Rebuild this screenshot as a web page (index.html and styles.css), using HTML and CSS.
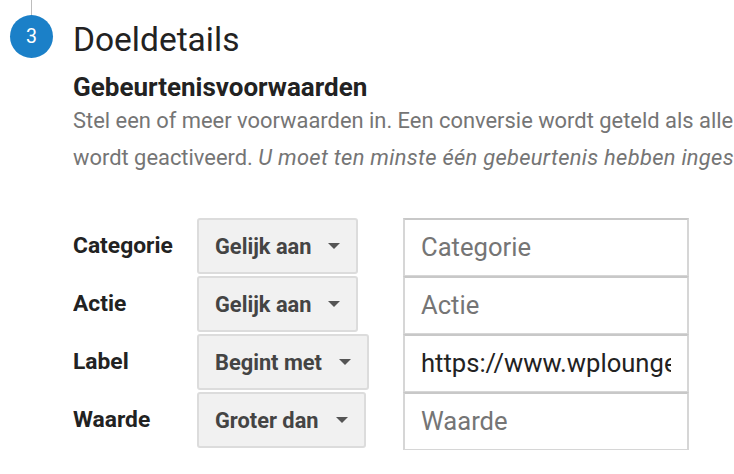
FILE: index.html
```html
<!DOCTYPE html>
<html lang="nl">
<head>
<meta charset="utf-8">
<link rel="stylesheet" href="styles.css">
</head>
<body>
<div class="step">
  <div class="rail">
    <div class="rail-line"></div>
    <div class="badge">3</div>
  </div>
  <div class="content">
    <h1 class="title">Doeldetails</h1>
    <h2 class="subtitle">Gebeurtenisvoorwaarden</h2>
    <p class="desc">
      <span class="line">Stel een of meer voorwaarden in. Een conversie wordt geteld als alle voorwaarden</span>
      <span class="line">wordt geactiveerd. <em>U moet ten minste één gebeurtenis hebben ingesteld</em></span>
    </p>
    <div class="conditions">
      <div class="label">Categorie</div>
      <div class="select"><span>Gelijk aan</span><span class="caret"></span></div>
      <div class="field placeholder"><span class="value">Categorie</span></div>

      <div class="label">Actie</div>
      <div class="select"><span>Gelijk aan</span><span class="caret"></span></div>
      <div class="field placeholder"><span class="value">Actie</span></div>

      <div class="label">Label</div>
      <div class="select"><span>Begint met</span><span class="caret"></span></div>
      <div class="field"><span class="value">https://www.wplounge.nl/</span></div>

      <div class="label">Waarde</div>
      <div class="select"><span>Groter dan</span><span class="caret"></span></div>
      <div class="field placeholder"><span class="value">Waarde</span></div>
    </div>
  </div>
</div>
</body>
</html>
```
FILE: styles.css
```css
html, body {
  margin: 0;
  padding: 0;
  background: #fff;
  overflow: hidden;
}
body {
  font-family: Roboto, "Noto Sans", Arial, sans-serif;
  color: #222;
  width: 734px;
  height: 474px;
}
.step {
  display: flex;
  align-items: flex-start;
}
.rail {
  width: 73px;
  flex: none;
  display: flex;
  flex-direction: column;
  align-items: flex-start;
}
.rail-line {
  width: 1px;
  height: 15px;
  background: #bdbdbd;
  margin-left: 31px;
}
.badge {
  width: 43px;
  height: 43px;
  margin-left: 10px;
  border-radius: 50%;
  background: #1b80c8;
  color: #fff;
  font-size: 19.5px;
  display: flex;
  align-items: center;
  justify-content: center;
}
.content {
  flex: none;
  width: 661px;
  overflow: hidden;
}
.title {
  margin: 18px 0 0;
  font-size: 33.5px;
  font-weight: 400;
  line-height: 44px;
  color: #222;
}
.subtitle {
  margin: 10px 0 0;
  font-size: 26px;
  font-weight: 700;
  line-height: 30px;
  color: #222;
}
.desc {
  margin: 0;
  font-size: 21.9px;
  line-height: 37px;
  color: #757575;
  white-space: nowrap;
}
.desc .line {
  display: block;
}
.desc em {
  font-style: italic;
  letter-spacing: 0.3px;
}
.conditions {
  margin-top: 42px;
  display: grid;
  grid-template-columns: 124px 206px 286px;
  grid-auto-rows: 58px;
  align-items: start;
}
.label {
  font-size: 22.8px;
  font-weight: 700;
  color: #222;
  line-height: 56px;
}
.select {
  justify-self: start;
  height: 56px;
  box-sizing: border-box;
  display: flex;
  align-items: center;
  gap: 17px;
  padding: 0 16px;
  background: #f1f1f1;
  border: 2px solid #dcdcdc;
  border-radius: 3px;
  font-size: 21.8px;
  font-weight: 700;
  color: #444;
}
.caret {
  width: 0;
  height: 0;
  border-left: 6px solid transparent;
  border-right: 6px solid transparent;
  border-top: 6px solid #555;
}
.field {
  height: 59px;
  box-sizing: border-box;
  margin-bottom: -1px;
  border: 2px solid #d6d6d6;
  border-top-color: #c8c8c8;
  padding: 0 16px;
  font-size: 25.6px;
  line-height: 55px;
  color: #222;
}
.field .value {
  display: block;
  white-space: nowrap;
  overflow: hidden;
}
.field.placeholder {
  color: #757575;
}
```
